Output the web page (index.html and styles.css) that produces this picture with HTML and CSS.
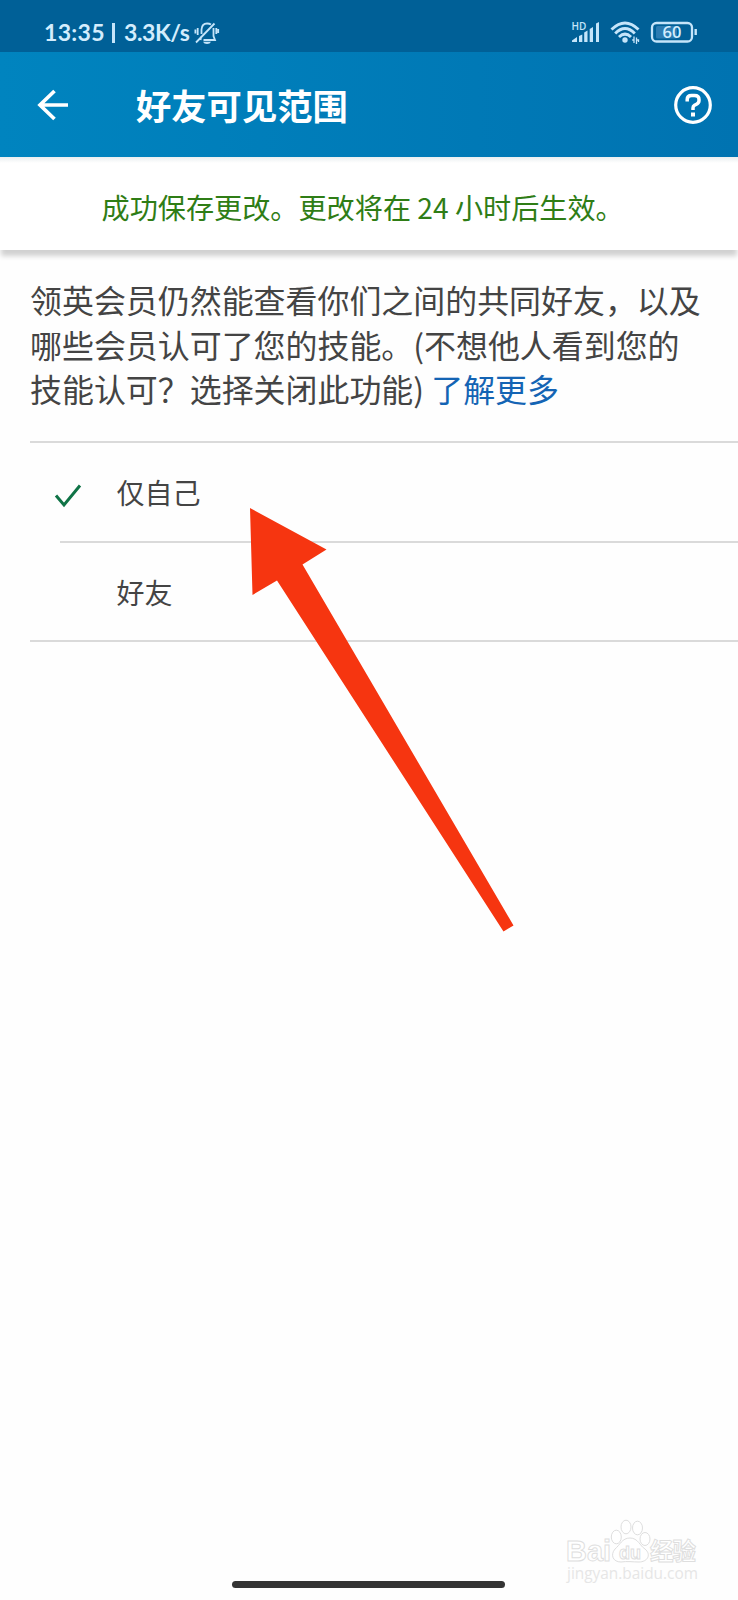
FILE: index.html
```html
<!DOCTYPE html>
<html lang="zh-CN">
<head>
<meta charset="utf-8">
<title>好友可见范围</title>
<link rel="stylesheet" href="styles.css">
</head>
<body>
<div class="screen">
  <div class="status">
    <span class="clock">13:35</span><span class="divider"></span><span class="speed">3.3K/s</span>
    <svg class="bell" width="26" height="24" viewBox="0 0 26 24" fill="none" stroke="#c5e5fa" stroke-width="1.8">
      <path d="M7.500 13V8.500Q8 2.500 13 2.500Q15.500 2.500 17 3.500M19.500 7V15L21 19H9.500M7 16L6.500 19M2 21.500L20.500 2.500M3.700 7V14M1.400 8.500V12.500M22.300 7V13M24.200 8V12"/>
      <path d="M9 20.800H17Q16 23 13 23T9 20.800Z" fill="#c5e5fa" stroke="none"/>
    </svg>
    <div class="signals">
      <svg width="29" height="24" viewBox="0 0 29 24" fill="#c5e5fa">
        <text class="hd" x="0.500" y="9">HD</text>
        <path d="M1 21V19.500L6 16V21ZM8 15L11.300 13.500V21H8ZM13.200 11.500L16.500 9.500V21H13.200ZM18.700 8L22 6V21H18.700ZM25 2.500L28 1V21H25Z"/>
      </svg>
      <svg width="30" height="24" viewBox="0 0 30 24" fill="none" stroke="#c5e5fa">
        <path d="M1.500 8.500Q15-4.500 28.500 8.500M5.200 12.500Q15 2.500 24.800 12.500M9 16Q15 10.200 21 16" stroke-width="2.900"/>
        <circle cx="15" cy="19" r="2.700" fill="#c5e5fa" stroke="none"/>
        <path d="M22.200 19H24V15.500M24 15.500V22M26.500 23V16.500M26.500 19H28.500V21" stroke-width="1.300"/>
      </svg>
      <svg width="48" height="24" viewBox="0 0 48 24" fill="none">
        <rect x="6" y="5" width="21" height="12.500" rx="1.500" fill="#2c7cb2"/>
        <rect x="2" y="2" width="40" height="18.500" rx="4.500" stroke="#c5e5fa" stroke-width="2.300"/>
        <path d="M45.700 8V14" stroke="#c5e5fa" stroke-width="2.400"/>
        <text class="charge" x="22" y="17.200">60</text>
      </svg>
    </div>
  </div>
  <header class="bar">
    <svg class="back" width="32" height="32" viewBox="0 0 32 32" fill="none" stroke="#fff" stroke-width="3.700"><path d="M31 16H4M17.500 2L3 16L17.500 30"/></svg>
    <h1 class="title">好友可见范围</h1>
    <svg class="help" width="40" height="40" viewBox="0 0 40 40" fill="none" stroke="#fff">
      <circle cx="20" cy="20" r="17.300" stroke-width="3.200"/>
      <path d="M14.200 16.500V14.500Q14.200 10.500 18.500 10.500H21.500Q26 10.500 26 14.500V15.500Q26 18 23.500 19.300L21.500 20.300Q20 21.200 20 23V25" stroke-width="3.500"/>
      <path d="M18 27.500H22V31.500H18Z" fill="#fff" stroke="none"/>
    </svg>
  </header>
  <div class="notice">成功保存更改。更改将在 24 小时后生效。</div>
  <main class="content">
    <p class="intro">领英会员仍然能查看你们之间的共同好友，以及<br>哪些会员认可了您的技能。(不想他人看到您的<br>技能认可？选择关闭此功能) <a class="more">了解更多</a></p>
    <div class="options">
      <div class="option">
        <svg class="check" width="28" height="26" viewBox="0 0 28 26" fill="none" stroke="#0f7346" stroke-width="3"><path d="M2 12.500L10 22L26 2.500"/></svg>
        <span>仅自己</span>
      </div>
      <div class="inset"></div>
      <div class="option"><span>好友</span></div>
    </div>
  </main>
  <svg class="pointer" width="266" height="426" viewBox="0 0 266 426"><path d="M0 0L76.500 41.500L52.500 56.500L263.500 417.500L253.500 423.500L27 72.500L2.500 87Z" fill="#f63510"/></svg>
  <svg class="mark" width="150" height="72" viewBox="0 0 150 72" fill="#fff" stroke="#dedede" stroke-width="1">
    <text class="brand" x="5" y="46" textLength="45" lengthAdjust="spacingAndGlyphs">Bai</text>
    <ellipse cx="55.300" cy="22" rx="5" ry="6.800"/><ellipse cx="65" cy="12" rx="5" ry="6.800"/><ellipse cx="76.500" cy="13" rx="5" ry="6.800"/><ellipse cx="84" cy="24" rx="5" ry="6.500"/>
    <path d="M69 23C77 23 79 31 84 34C91 40 86 47 78 47C72 47 66 46 60 47C52 47 49 40 54 34C59 30 61 23 69 23Z"/>
    <text class="paw" x="58" y="43.500" textLength="22" lengthAdjust="spacingAndGlyphs">du</text>
    <text class="cn" x="89" y="45" textLength="46">经验</text>
    <text class="site" x="6" y="64" textLength="131" lengthAdjust="spacingAndGlyphs">jingyan.baidu.com</text>
  </svg>
  <div class="home"></div>
</div>
</body>
</html>
```
FILE: styles.css
```css
* { box-sizing: border-box; }
body { margin: 0; background: #fff; }
.screen {
  position: relative;
  display: flex;
  flex-direction: column;
  width: 738px;
  height: 1600px;
  overflow: hidden;
  background: #fefefe;
  color: #444;
  font-family: "Noto Sans CJK SC", sans-serif;
}
.status {
  display: flex;
  flex: none;
  align-items: center;
  height: 52px;
  padding: 13px 26px 0 44px;
  background: #006097;
  color: #d3edfd;
  font: 700 23px/28px Lato, sans-serif;
}
.clock { width: 68px; padding-bottom: 2px; letter-spacing: 0.3px; }
.divider { width: 3px; height: 20px; margin-right: 9px; background: #c5e5fa; }
.speed { width: 70px; padding-bottom: 2px; letter-spacing: -0.4px; white-space: nowrap; }
.signals { display: flex; gap: 10px; margin-left: auto; margin-right: -20px; width: 161px; }
.signals svg { flex: none; overflow: visible; }
.hd { font: 600 10px/1 "Open Sans", sans-serif; }
.charge { font: 600 16.5px "Open Sans", sans-serif; text-anchor: middle; fill: #d3edfd; }
.bar {
  display: flex;
  flex: none;
  align-items: center;
  height: 105px;
  padding: 0 25px 0 37px;
  background: linear-gradient(90deg, #0084bf, #0073b1);
  z-index: 2;
}
.title { margin: 0 0 0 67px; font-size: 35.3px; line-height: 52px; font-weight: 700; color: #fff; }
.help { margin-left: auto; }
.notice {
  flex: none;
  height: 93px;
  padding: 29px 0 0 101.5px;
  background: linear-gradient(#e9eef0, #fff 6px);
  box-shadow: 0 7px 5px -1px rgba(0, 0, 0, .18);
  color: #2f7d16;
  font-size: 28.15px;
  line-height: 42px;
  white-space: nowrap;
  z-index: 1;
}
.content { padding: 27px 0 0 30px; }
.intro { margin: 0; height: 164px; font-size: 31.95px; line-height: 44.5px; white-space: nowrap; }
.more { color: #1464b4; }
.options { border-top: 2px solid #dadada; border-bottom: 2px solid #dadada; }
.option { display: flex; align-items: center; height: 98px; padding-left: 86.5px; font-size: 28px; line-height: 42px; }
.option + .inset + .option { height: 97px; }
.check { margin: 8px 35px 0 -63px; }
.inset { height: 2px; margin-left: 30px; background: #dadada; }
.pointer { position: absolute; left: 250px; top: 508px; }
.mark { position: absolute; left: 561px; top: 1515px; }
.brand { font: 700 30px "Liberation Sans", sans-serif; }
.paw { font: 700 19px "Liberation Sans", sans-serif; }
.cn { font: 700 23.5px "Noto Sans CJK SC", sans-serif; }
.site { font: 16px "Open Sans", sans-serif; fill: #e6e6e6; stroke: none; }
.home { width: 273px; height: 7px; margin: auto auto 12px 232px; border-radius: 4px; background: #343434; }
```
